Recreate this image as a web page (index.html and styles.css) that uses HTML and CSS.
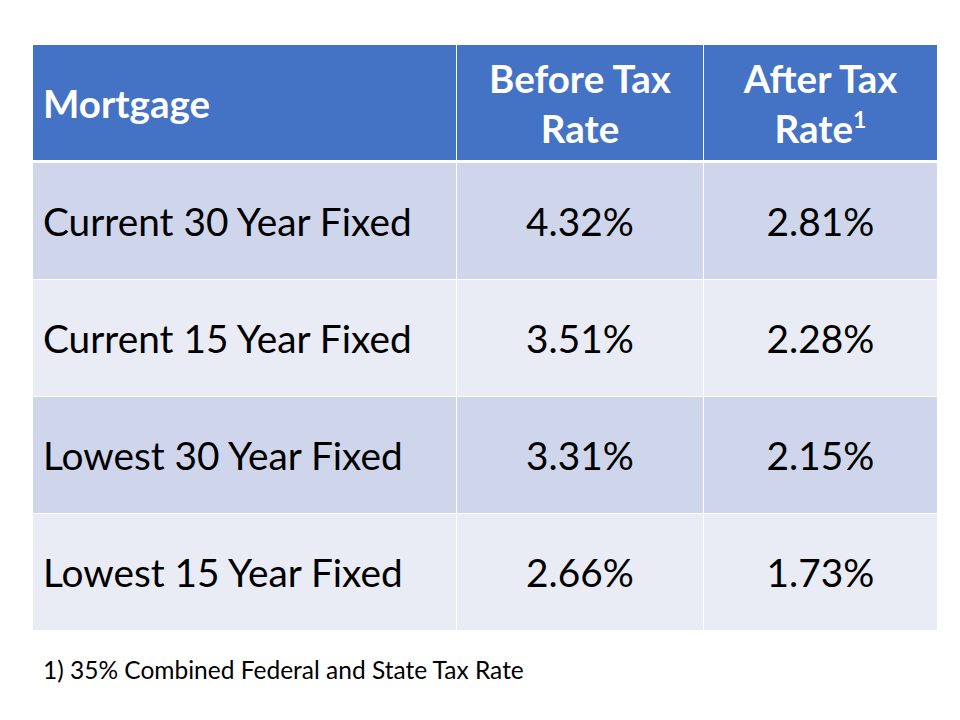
FILE: index.html
```html
<!DOCTYPE html>
<html lang="en">
<head>
<meta charset="utf-8">
<title>Mortgage Rates</title>
<link rel="stylesheet" href="styles.css">
</head>
<body>
<div class="slide">
  <table class="rates">
    <colgroup>
      <col class="c1">
      <col class="c2">
      <col class="c3">
    </colgroup>
    <thead>
      <tr>
        <th class="name">Mortgage</th>
        <th class="num">Before Tax<br>Rate</th>
        <th class="num">After Tax<br>Rate<sup>1</sup></th>
      </tr>
    </thead>
    <tbody>
      <tr class="odd">
        <td class="name">Current 30 Year Fixed</td>
        <td class="num">4.32%</td>
        <td class="num">2.81%</td>
      </tr>
      <tr class="even">
        <td class="name">Current 15 Year Fixed</td>
        <td class="num">3.51%</td>
        <td class="num">2.28%</td>
      </tr>
      <tr class="odd">
        <td class="name">Lowest 30 Year Fixed</td>
        <td class="num">3.31%</td>
        <td class="num">2.15%</td>
      </tr>
      <tr class="even">
        <td class="name">Lowest 15 Year Fixed</td>
        <td class="num">2.66%</td>
        <td class="num">1.73%</td>
      </tr>
    </tbody>
  </table>
  <p class="note">1) 35% Combined Federal and State Tax Rate</p>
</div>
</body>
</html>
```

FILE: styles.css
```css
html, body {
  margin: 0;
  padding: 0;
  background: #ffffff;
}

.slide {
  width: 960px;
  height: 720px;
  padding: 45px 0 0 33px;
  box-sizing: border-box;
  font-family: Lato, "Open Sans", "Liberation Sans", sans-serif;
  color: #000000;
}

.rates {
  border-collapse: separate;
  border-spacing: 0;
  table-layout: fixed;
  width: 904px;
}

.c1 { width: 423px; }
.c2 { width: 247px; }
.c3 { width: 234px; }

.rates th,
.rates td {
  padding: 0 10px 0 11px;
  vertical-align: middle;
  box-sizing: border-box;
}

.rates th + th,
.rates td + td {
  border-left: 1px solid #ffffff;
}

.rates thead th {
  background: #4472c4;
  color: #ffffff;
  font-weight: 700;
  font-size: 38.5px;
  line-height: 50px;
  height: 118px;
  border-bottom: 3px solid #ffffff;
}

.rates tbody td {
  font-size: 38.8px;
  line-height: 44px;
  height: 116px;
}

.rates tbody tr + tr td {
  border-top: 1px solid #ffffff;
  height: 117px;
}

.rates tr.odd td { background: #cfd5ea; }
.rates tr.even td { background: #e9ebf5; }

.rates .name { text-align: left; padding-left: 10px; }
.rates .num { text-align: center; padding-left: 10px; }

.rates sup {
  font-size: 23px;
  line-height: 0;
  vertical-align: 15px;
}

.note {
  margin: 25px 0 0 10px;
  font-size: 24.5px;
  line-height: 30px;
}
```
